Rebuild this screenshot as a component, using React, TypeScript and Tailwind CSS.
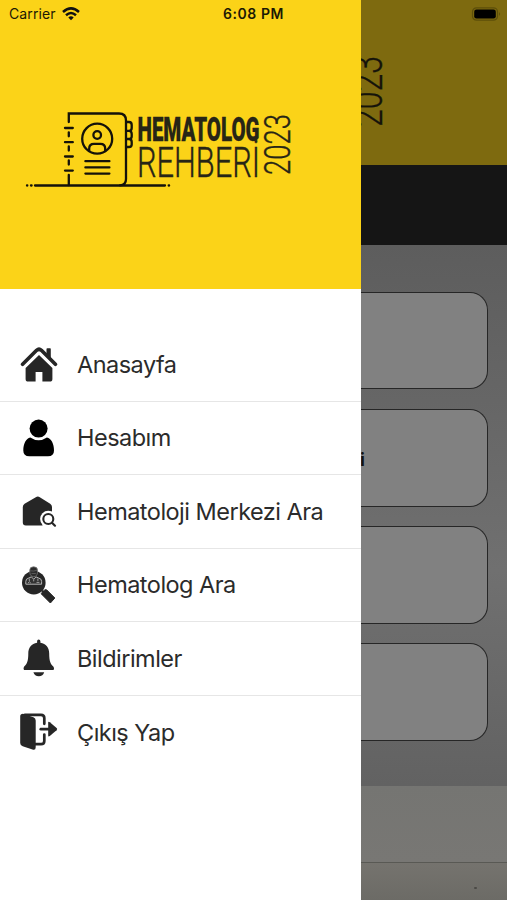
import type { ReactNode } from 'react';

function HomeIcon() {
  return (
    <svg viewBox="0 0 38 38" className="h-[38px] w-[38px]" fill="#262626">
      <path d="M2.6 19.2 L16.6 5.3 Q19 3.2 21.4 5.3 L35.4 19.2" fill="none" stroke="#262626" strokeWidth="3.7" strokeLinecap="round" strokeLinejoin="round" />
      <path d="M27.3 3.2 h2.7 q.8 0 .8 .8 v10.8 l-4.3 -4.2 V4 q0 -.8 .8 -.8z" />
      <path d="M19 10 L32.4 23 V34 q0 2.6 -2.6 2.6 H22.4 V27 h-6.8 v9.6 H8.2 q-2.6 0 -2.6 -2.6 V23z" />
    </svg>
  );
}

function UserIcon() {
  return (
    <svg viewBox="0 0 38 38" className="h-[38px] w-[38px]" fill="#000">
      <circle cx="18.6" cy="9.6" r="9" />
      <path d="M3.3 31.4 C3.3 24.4 6 19.6 10.3 18.4 Q18.6 24 26.9 18.4 C31.3 19.6 34 24.4 34 31.4 Q34 37.2 28 37.2 H9.3 Q3.3 37.2 3.3 31.4z" />
    </svg>
  );
}

function CenterSearchIcon() {
  return (
    <svg viewBox="0 0 38 38" className="h-[38px] w-[38px]">
      <path d="M15.8 5.2 Q17.8 3.9 19.8 5.2 L30.2 11.7 Q32 12.9 32 14.9 V33.6 H5.8 Q2.8 33.6 2.8 30.6 V14.9 Q2.8 12.9 4.6 11.7z" fill="#262626" />
      <circle cx="28.3" cy="27" r="8.2" fill="#fff" />
      <path d="M22.5 29 h11.5 v7 h-11.5z" fill="#fff" />
      <circle cx="28.3" cy="27" r="5" fill="none" stroke="#262626" strokeWidth="2.1" />
      <path d="M32 30.7 L35 33.7" stroke="#262626" strokeWidth="2.2" strokeLinecap="round" />
    </svg>
  );
}

function DoctorSearchIcon() {
  return (
    <svg viewBox="0 0 38 38" className="h-[38px] w-[38px]">
      <circle cx="13.8" cy="16.7" r="11.8" fill="#262626" />
      <path d="M22 24.5 l3 3" stroke="#262626" strokeWidth="2" />
      <path d="M21.6 28.2 Q21 27.4 21.7 26.7 L24.8 23.9 Q25.8 23.2 26.8 24 L34.8 32 L30.4 37z" fill="#262626" stroke="#262626" strokeWidth="1" strokeLinejoin="round" />
      <path d="M9.8 4 Q9.8 .8 13.6 .8 Q17.5 .8 17.5 4 V6.5 Q17.2 10.6 13.7 10.6 Q10.1 10.6 9.8 6.5z" fill="#2c2c2c" stroke="#777" strokeWidth=".8" />
      <path d="M10.3 4.8 q3.4 .8 6.7 -.6 M11.5 7.5 h4.3" stroke="#777" strokeWidth=".6" fill="none" />
      <path d="M5.8 18.2 V15.4 Q5.8 12.6 8.8 12 L11.4 10.9 L13.7 13.2 L16 10.9 L18.6 12 Q21.6 12.6 21.6 15.4 V18.2z" fill="#333" stroke="#b5b5b5" strokeWidth="1" />
      <path d="M9.3 12.6 v2.6 M8 17 q1.3 -2.4 2.8 0 M17.9 12.5 v2.6 M16.5 16.4 h2.9 M13.7 13.4 v2" stroke="#aaa" strokeWidth=".9" fill="none" />
    </svg>
  );
}

function BellIcon() {
  return (
    <svg viewBox="0 0 38 38" className="h-[38px] w-[38px]" fill="#262626">
      <path d="M18.7 .6 Q20.4 .6 20.4 2.3 V3.7 C26 4.5 29.2 8.7 29.2 14.4 C29.2 21.9 30.4 24.6 33.3 27.6 Q34.2 28.7 34 29.9 Q33.7 31.1 32.4 31.1 H5 Q3.8 31.1 3.6 29.9 Q3.4 28.7 4.2 27.6 C7.1 24.6 8.3 21.9 8.3 14.4 C8.3 8.7 11.5 4.5 17.1 3.7 V2.3 Q17.1 .6 18.7 .6z" />
      <path d="M13.4 33.3 H24.2 Q23 37.3 18.8 37.3 Q14.6 37.3 13.4 33.3z" />
    </svg>
  );
}

function LogoutIcon() {
  return (
    <svg viewBox="0 0 38 38" className="h-[38px] w-[38px]" fill="#262626">
      <path d="M5 1.8 H21 Q24.3 1.8 24.3 5.1 V10.8 M24.3 21.6 V28 Q24.3 31.2 21 31.2 H15" fill="none" stroke="#262626" strokeWidth="2.7" strokeLinecap="round" />
      <path d="M.2 3.4 Q.2 1 3 .8 L13.4 4.3 Q15.7 5.1 15.7 7.5 V34.2 Q15.7 37.6 12.5 36.5 L2.7 33.3 Q.2 32.5 .2 30z" />
      <path d="M20.8 16.2 H30" stroke="#262626" strokeWidth="2.7" strokeLinecap="round" />
      <path d="M28.2 9.8 Q28.2 8.2 29.8 9.3 L36.6 15.1 Q37.8 16.2 36.6 17.3 L29.8 23.1 Q28.2 24.2 28.2 22.6z" />
    </svg>
  );
}

function Logo() {
  return (
    <svg
      viewBox="0 0 270 84"
      className="ml-6 h-[84px] w-[270px] overflow-visible"
      fill="none"
      stroke="#14120a"
      strokeWidth="2.3"
      strokeLinecap="round"
    >
      {/* address book */}
      <path d="M44.8 14 V5.5 H95 Q102 5.5 102 12.5 V71 Q102 77.3 96 77.3" />
      <path d="M44.8 24.3 V28.3 M44.8 38.5 V42.5 M44.8 52.5 V56.5 M44.8 67 V77" />
      <path d="M41 20 H48.8 M41 34.2 H48.8 M41 48.5 H48.8 M41 62.6 H48.8" />
      <path d="M102.3 14 H105 Q107.7 14 107.7 17 V20 Q107.7 22.8 105 22.8 H102.3 M105 22.8 Q107.7 22.8 107.7 26 V28.5 Q107.7 31 105 31 H102.3 M105 31 Q107.7 31 107.7 34 V36.5 Q107.7 39 105 39 H102.3" />
      <circle cx="73.2" cy="30.7" r="15" />
      <circle cx="73.2" cy="27" r="3.8" />
      <path d="M65.2 43 V40.5 Q65.2 35.8 70 35.8 H76.4 Q81.2 35.8 81.2 40.5 V43" />
      <path d="M61.4 53.2 H85.4 M61.4 59.4 H85.4 M61.4 65.6 H85.4" />
      <path d="M11 77.5 H141 M3 77.5 h.3 M7 77.5 h.6 M144.7 77.5 h.4" />
      <g fill="#272516" stroke="#272516" fontFamily="Roboto, 'Liberation Sans', sans-serif">
        <text x="113.5" y="33" fontSize="33" strokeWidth="0.3" fontWeight="900" textLength="122" lengthAdjust="spacingAndGlyphs">HEMATOLOG</text>
        <text x="113" y="69" fontSize="42.5" strokeWidth="0.4" fontWeight="300" textLength="123" lengthAdjust="spacingAndGlyphs">REHBERİ</text>
        <text transform="translate(266 67) rotate(-90)" fontSize="36" strokeWidth="0.4" fontWeight="300" textLength="61" lengthAdjust="spacingAndGlyphs">2023</text>
      </g>
    </svg>
  );
}

const menu: { label: string; icon: ReactNode }[] = [
  { label: 'Anasayfa', icon: <HomeIcon /> },
  { label: 'Hesabım', icon: <UserIcon /> },
  { label: 'Hematoloji Merkezi Ara', icon: <CenterSearchIcon /> },
  { label: 'Hematolog Ara', icon: <DoctorSearchIcon /> },
  { label: 'Bildirimler', icon: <BellIcon /> },
  { label: 'Çıkış Yap', icon: <LogoutIcon /> },
];

function Drawer() {
  return (
    <aside className="flex w-[361px] shrink-0 flex-col bg-white">
      <header className="h-[289px] bg-[#fbd318]">
        <div className="flex h-[27px] items-center pl-[9px] text-[#1c1904]">
          <span className="w-[47px] text-[14px] tracking-[0.1px] whitespace-nowrap">Carrier</span>
          <svg viewBox="0 0 18 14" className="ml-[6px] h-[14px] w-[18px]" fill="none" stroke="#111" strokeWidth="2.5">
            <path d="M1 5 Q9 -2.3 17 5" />
            <path d="M4 8.2 Q9 3.8 14 8.2" />
            <path d="M6.3 10.4 Q9 8 11.7 10.4 L9 13.3z" fill="#111" stroke="none" />
          </svg>
          <span className="ml-[143px] text-[14px] font-semibold tracking-[0.55px] whitespace-nowrap">6:08 PM</span>
        </div>
        <div className="pt-[81px]">
          <Logo />
        </div>
      </header>
      <nav className="pt-[39px]">
        {menu.map((item, i) => (
          <a
            key={item.label}
            className={`flex h-[73.5px] items-center pl-5 ${i < menu.length - 1 ? 'border-b border-[#e6e6e6]' : ''}`}
          >
            {item.icon}
            <span className="ml-[19px] text-[23.5px] tracking-[-0.52px] whitespace-nowrap text-[#2b2b2b]">
              {item.label}
            </span>
          </a>
        ))}
      </nav>
    </aside>
  );
}

function Battery() {
  return (
    <svg viewBox="0 0 32 14" className="h-[14px] w-[32px]">
      <rect x="1.5" y=".8" width="25" height="12.4" rx="4" fill="none" stroke="#5d4f0a" strokeWidth="1.2" />
      <rect x="3.2" y="2.5" width="21.6" height="9" rx="2.3" fill="#000" />
      <path d="M28.2 5 q1.8 2 0 4z" fill="#554707" />
    </svg>
  );
}

const cards = ['', 'i', '', ''];

function DimmedHome() {
  return (
    <main className="flex w-[146px] flex-col overflow-hidden">
      <div className="h-[165px] bg-[#7e6a0f]">
        <div className="flex h-[27px] items-center justify-end pr-1">
          <Battery />
        </div>
        <svg viewBox="0 0 30 80" className="mt-[25px] h-20 w-[30px]">
          <text
            transform="translate(20.5 75) rotate(-90)"
            fontSize="42"
            fontWeight="300"
            fontFamily="Roboto, sans-serif"
            fill="#15130a"
            stroke="#15130a"
            strokeWidth="0.3"
            textLength="71"
            lengthAdjust="spacingAndGlyphs"
          >
            2023
          </text>
        </svg>
      </div>
      <div className="h-20 bg-[#151515]" />
      <div className="flex h-[541px] flex-col gap-[19.4px] bg-linear-to-b from-[#5d5d5d] via-[#707070] via-60% to-[#626262] pt-[46.6px] pr-[19px]">
        {cards.map((text, i) => (
          <div
            key={i}
            className="flex h-[97.8px] shrink-0 items-center rounded-r-[18px] border-[1.5px] border-l-0 border-[#262626] bg-[#818181]"
          >
            <span className="-ml-px pt-[4px] text-[18px] font-bold text-[#111]">{text}</span>
          </div>
        ))}
      </div>
      <div className="h-[77px] border-b border-[#595954] bg-linear-to-b from-[#757572] to-[#787774]" />
      <div className="flex-1 bg-linear-to-b from-[#75736e] to-[#6c6b66]">
        <div className="mt-6 ml-[113px] h-[2px] w-[3px] rounded-full bg-[#4b4a46]" />
      </div>
    </main>
  );
}

export default function App() {
  return (
    <div className="flex h-[900px] w-[507px] overflow-hidden font-[Inter,'Liberation_Sans',sans-serif]">
      <Drawer />
      <DimmedHome />
    </div>
  );
}
